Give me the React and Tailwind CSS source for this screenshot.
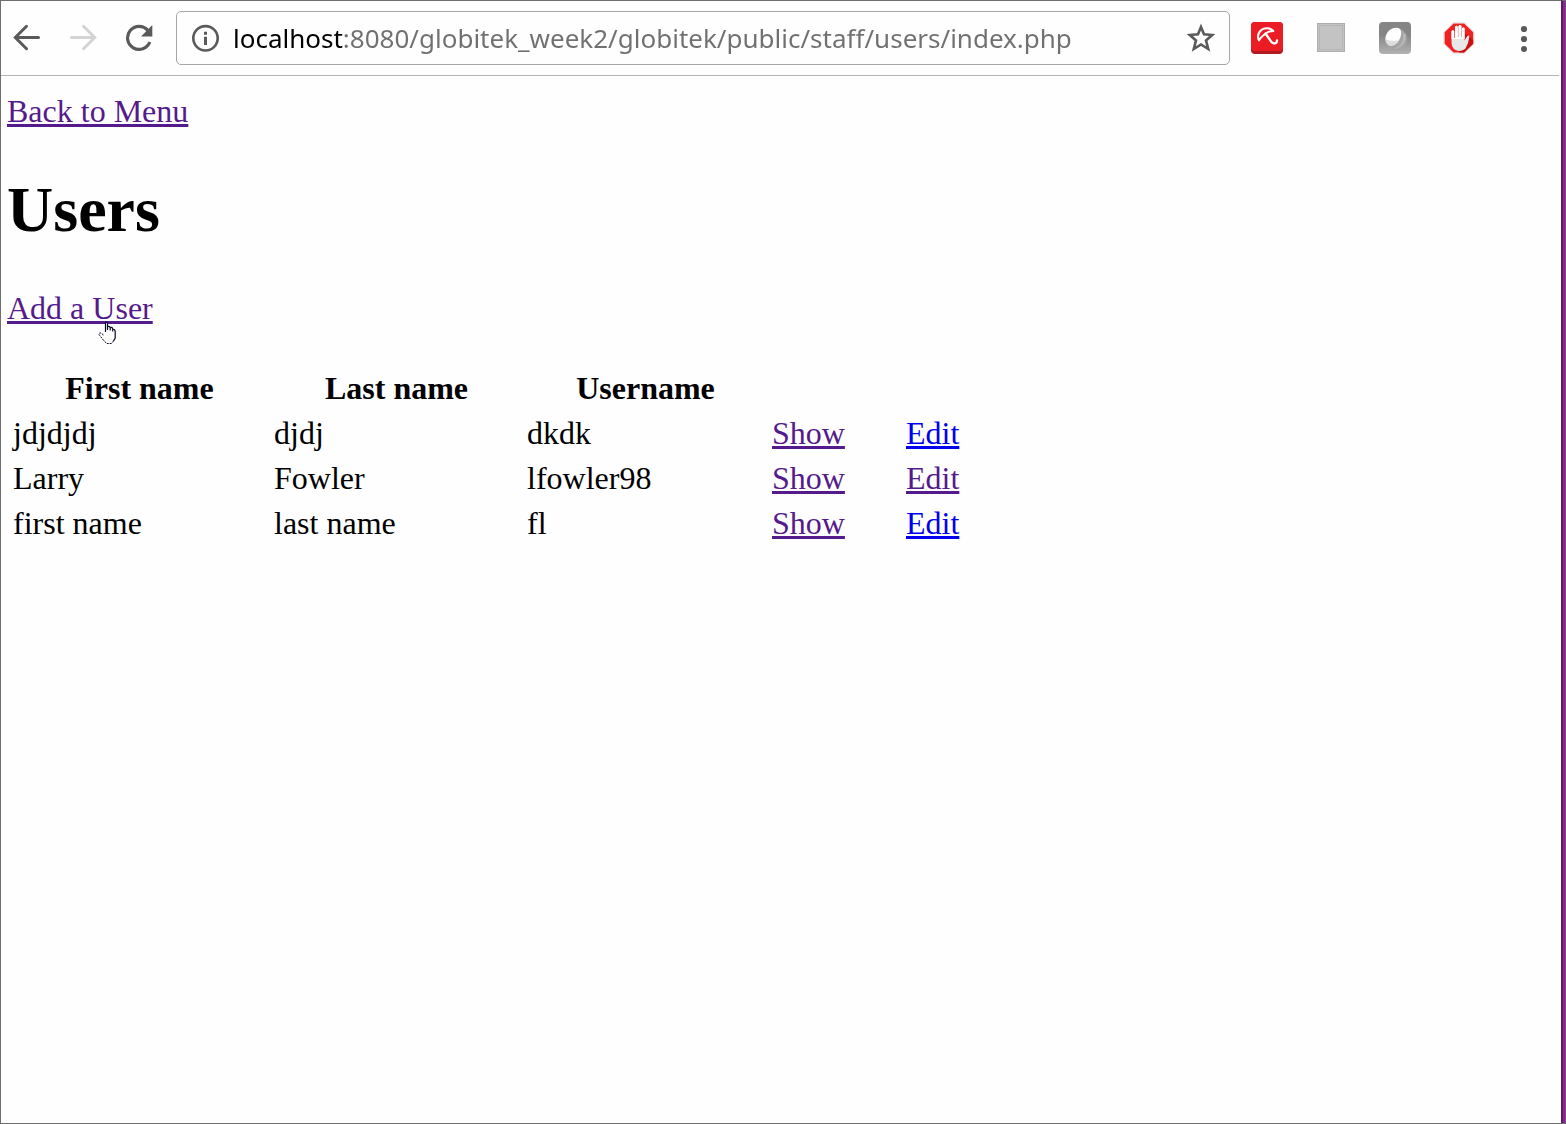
import React from "react";

const VISITED = "text-[#551a8b]";
const UNVISITED = "text-[#0000ee]";

const users = [
  { first: "jdjdjdj", last: "djdj", username: "dkdk", edited: false },
  { first: "Larry", last: "Fowler", username: "lfowler98", edited: true },
  { first: "first name", last: "last name", username: "fl", edited: false },
];

function PageLink({ visited = true, children }) {
  return (
    <a
      href="#"
      className={`underline decoration-3 underline-offset-2 [text-decoration-skip-ink:none] ${visited ? VISITED : UNVISITED}`}
    >
      {children}
    </a>
  );
}

function BackIcon() {
  return (
    <svg width="28" height="28" viewBox="0 0 28 28" fill="none" stroke="currentColor" strokeWidth="3" strokeLinecap="round">
      <path d="M25.5 13.5H3M13.5 2.3L2.3 13.5L13.5 24.7" />
    </svg>
  );
}

function ForwardIcon() {
  return (
    <svg width="28" height="28" viewBox="0 0 28 28" fill="none" stroke="currentColor" strokeWidth="3" strokeLinecap="round">
      <path d="M2.5 13.5H25M14.5 2.3L25.7 13.5L14.5 24.7" />
    </svg>
  );
}

function ReloadIcon() {
  return (
    <svg width="28" height="28" viewBox="0 0 28 28" fill="none">
      <path d="M22.8 6.4A11.5 11.5 0 1 0 24.8 18" stroke="currentColor" strokeWidth="3.2" />
      <path d="M27.3 1V12.4H16Z" fill="currentColor" />
    </svg>
  );
}

function InfoIcon() {
  return (
    <svg width="28" height="28" viewBox="0 0 28 28" fill="none">
      <circle cx="14.5" cy="14.3" r="12.2" stroke="#5a5a5a" strokeWidth="2.6" />
      <path d="M13 12.8h3V21h-3zM13 7.8h3v3h-3z" fill="#5a5a5a" />
    </svg>
  );
}

function StarIcon() {
  return (
    <svg width="30" height="30" viewBox="0 0 30 30" fill="none" stroke="#5a5a5a" strokeWidth="2.6">
      <path d="M15 4L18 11.3L26.2 12L20 17.4L22.2 26L15 21.5L7.8 26L10 17.4L3.8 12L12 11.3Z" />
    </svg>
  );
}

function UmbrellaIcon() {
  return (
    <svg width="32" height="32" viewBox="0 0 32 32" fill="none">
      <rect width="32" height="32" rx="4" fill="#b01a20" />
      <rect width="32" height="29" rx="4" fill="#ec1c24" />
      <path d="M8 18.3C5 12 10 6.2 16 6.3C18.5 6.3 20.7 7.2 22.3 9C19 9 16.5 10 14 12C11.5 13.8 9.6 15.8 8 18.3Z" stroke="#fff" strokeWidth="2.1" strokeLinejoin="round" />
      <path d="M14.5 11.5L20.2 19.6C21.8 22 25.8 22.4 26 18.5" stroke="#fff" strokeWidth="2.3" strokeLinecap="round" />
    </svg>
  );
}

function BlankIcon() {
  return (
    <svg width="32" height="32" viewBox="0 0 32 32" fill="none">
      <rect x="2.5" y="1.5" width="27" height="28" fill="#c3c3c3" stroke="#adadad" />
      <rect x="4.5" y="3.5" width="23" height="24" stroke="#b5b5b5" />
    </svg>
  );
}

function BallIcon() {
  return (
    <svg width="32" height="32" viewBox="0 0 32 32">
      <defs>
        <linearGradient id="ballTile" x1="0" y1="0" x2="0" y2="1">
          <stop offset="0.4" stopColor="#858585" />
          <stop offset="1" stopColor="#b2b2b2" />
        </linearGradient>
      </defs>
      <rect width="32" height="32" rx="4" fill="url(#ballTile)" />
      <circle cx="17" cy="17" r="11" fill="#a4a4a4" />
      <path d="M26.5 12C28 20 22 27.5 14 27C21 25 25 20 24 12Z" fill="#b8b8b8" />
      <path d="M6.5 16.5C7 10 12 5.5 18 5.8C24 6.5 23 15 18.5 20.5C13.5 26 6.5 23.5 6.5 16.5Z" fill="#fff" />
      <path d="M6.5 17.5C10 18.8 15 18.8 19.8 18.6C16 24.5 11.5 25 8.5 22.5Q6.7 20.5 6.5 17.5Z" fill="#dedede" />
    </svg>
  );
}

function StopHandIcon() {
  return (
    <svg width="32" height="32" viewBox="0 0 32 32">
      <path d="M10 .8H21.5L31 10V22L21.5 31.2H10L.8 22V10Z" fill="#fff" stroke="#d8d8d8" strokeWidth=".8" />
      <path d="M10.5 1.6H21.2L30.2 10.3V21.7L21.2 30.4H10.5L1.6 21.7V10.3Z" fill="#ee2222" />
      <path d="M20 10L27 15L30.2 18V21.7L21.2 30.4H16Z" fill="#c90f0f" />
      <path d="M8.5 18V9.5Q9.8 7 11.2 9.5V16H12V5Q13.4 2.7 14.8 5V15H15.5V4Q17 1.8 18.4 4V15H19V6.5Q20.5 4.5 21.6 6.5V18.5L24 14.5Q26 12.5 26.3 15Q25.5 22 22.5 26.5C19 30 13 29.5 10.5 26.5C8.5 24 8.5 21 8.5 18Z" fill="#e8e8e8" />
      <path d="M8.5 17V9.5Q9.8 7 11.2 9.5V16H12V5Q13.4 2.7 14.8 5V15H15.5V4Q17 1.8 18.4 4V15H19V6.5Q20.5 4.5 21.6 6.5V17Z" fill="#fff" />
    </svg>
  );
}

function MenuIcon() {
  return (
    <svg width="8" height="28" viewBox="0 0 8 28" fill="#5a5a5a">
      <circle cx="4" cy="5" r="3.1" />
      <circle cx="4" cy="15" r="3.1" />
      <circle cx="4" cy="25" r="3" />
    </svg>
  );
}

function HandPointer() {
  return (
    <svg className="pointer-events-none absolute top-[31px] left-[91px]" width="19" height="24" viewBox="0 0 19 24">
      <path
        d="M7.5 13V2.5Q8.5 .5 9.5 2.5V9V6.5Q10.8 5 12 7V9.5V7.5Q13.5 6 14.5 8V10.5V8.5Q16.5 8 17 10V17C16.5 20 15 21.5 13.5 22.5H9C6 20.5 3.5 16.5 1.5 14Q1 11.5 3.5 12Q6 13 7.5 15"
        fill="#fff"
      />
      <path d="M7.5 11V1.5M7.5 1.5Q9 .5 9.5 3V9M9.5 5.5Q12 5 12.2 7V9.5M12.2 6.5Q14.5 6 14.7 8V10.5M14.7 8Q17 8 17.2 10.5V17L15.5 20" fill="none" stroke="#0b0b28" strokeWidth="1.2" />
      <path d="M15.5 20L13.5 22.5H9C6 20.5 3.5 16.5 1 13.5Q1 11.5 3 12L5.5 14" fill="none" stroke="#0b0b28" strokeWidth="1" strokeDasharray="2 1" />
    </svg>
  );
}

function Toolbar() {
  return (
    <header className="mr-0.5 flex h-[75px] items-center border-b border-[#b4b4b4] pr-[31px] pl-3">
      <nav className="flex gap-7 text-[#5a5a5a]" aria-label="Browser">
        <button type="button" aria-label="Back"><BackIcon /></button>
        <button type="button" aria-label="Forward" className="text-[#d4d4d4]"><ForwardIcon /></button>
        <button type="button" aria-label="Reload"><ReloadIcon /></button>
      </nav>
      <form className="ml-[23px] flex h-[54px] grow items-center rounded-[5px] border border-[#a6a6a6] pr-[13px] pl-3.5" onSubmit={(e) => e.preventDefault()}>
        <button type="button" aria-label="Site information"><InfoIcon /></button>
        <input
          type="text"
          aria-label="Address"
          defaultValue="localhost:8080/globitek_week2/globitek/public/staff/users/index.php"
          className="ml-3.5 h-12 min-w-0 grow bg-[linear-gradient(to_right,#000_110px,#707070_110px)] bg-clip-text font-['Noto_Sans','Open_Sans',sans-serif] text-[26px] text-transparent outline-none"
        />
        <button type="button" aria-label="Bookmark this page"><StarIcon /></button>
      </form>
      <div className="ml-[21px] flex items-center gap-8">
        <button type="button" aria-label="Browser safety"><UmbrellaIcon /></button>
        <button type="button" aria-label="Extension"><BlankIcon /></button>
        <button type="button" aria-label="Proxy extension"><BallIcon /></button>
        <button type="button" aria-label="Ad blocker"><StopHandIcon /></button>
      </div>
      <button type="button" aria-label="Menu" className="ml-[45px]"><MenuIcon /></button>
    </header>
  );
}

function UsersTable() {
  return (
    <table className="mt-[37px] w-[980px] table-fixed border-separate border-spacing-1">
      <colgroup>
        <col className="w-[257px]" />
        <col className="w-[249px]" />
        <col className="w-[241px]" />
        <col className="w-[130px]" />
        <col />
      </colgroup>
      <thead>
        <tr>
          <th className="p-0.5">First name</th>
          <th className="p-0.5">Last name</th>
          <th className="p-0.5">Username</th>
          <td />
          <td />
        </tr>
      </thead>
      <tbody>
        {users.map((user) => (
          <tr key={user.username}>
            <td className="p-0.5">{user.first}</td>
            <td className="p-0.5">{user.last}</td>
            <td className="p-0.5">{user.username}</td>
            <td className="p-0.5"><PageLink>Show</PageLink></td>
            <td className="p-0.5"><PageLink visited={user.edited}>Edit</PageLink></td>
          </tr>
        ))}
      </tbody>
    </table>
  );
}

export default function App() {
  return (
    <div className="flex min-h-screen border border-t-0 border-r-0 border-[#6e6e6e] bg-[#fefefe]">
      <div className="min-w-0 grow">
        <div className="flex h-px bg-[#6e6e6e]" />
        <Toolbar />
        <main className="px-1.5 pt-[17px] font-['Liberation_Serif',serif] text-[32px] leading-[37px] text-black">
          <PageLink>Back to Menu</PageLink>
          <h1 className="my-[43px] text-[64px] leading-[74px] font-bold">Users</h1>
          <div className="relative">
            <PageLink>Add a User</PageLink>
            <HandPointer />
          </div>
          <UsersTable />
        </main>
      </div>
      <div className="w-[5px] shrink-0 border-t border-r border-l-2 border-t-[#6e6e6e] border-r-[#7a4a80] border-l-[#5c1a68] bg-[#8a2596]" />
    </div>
  );
}
